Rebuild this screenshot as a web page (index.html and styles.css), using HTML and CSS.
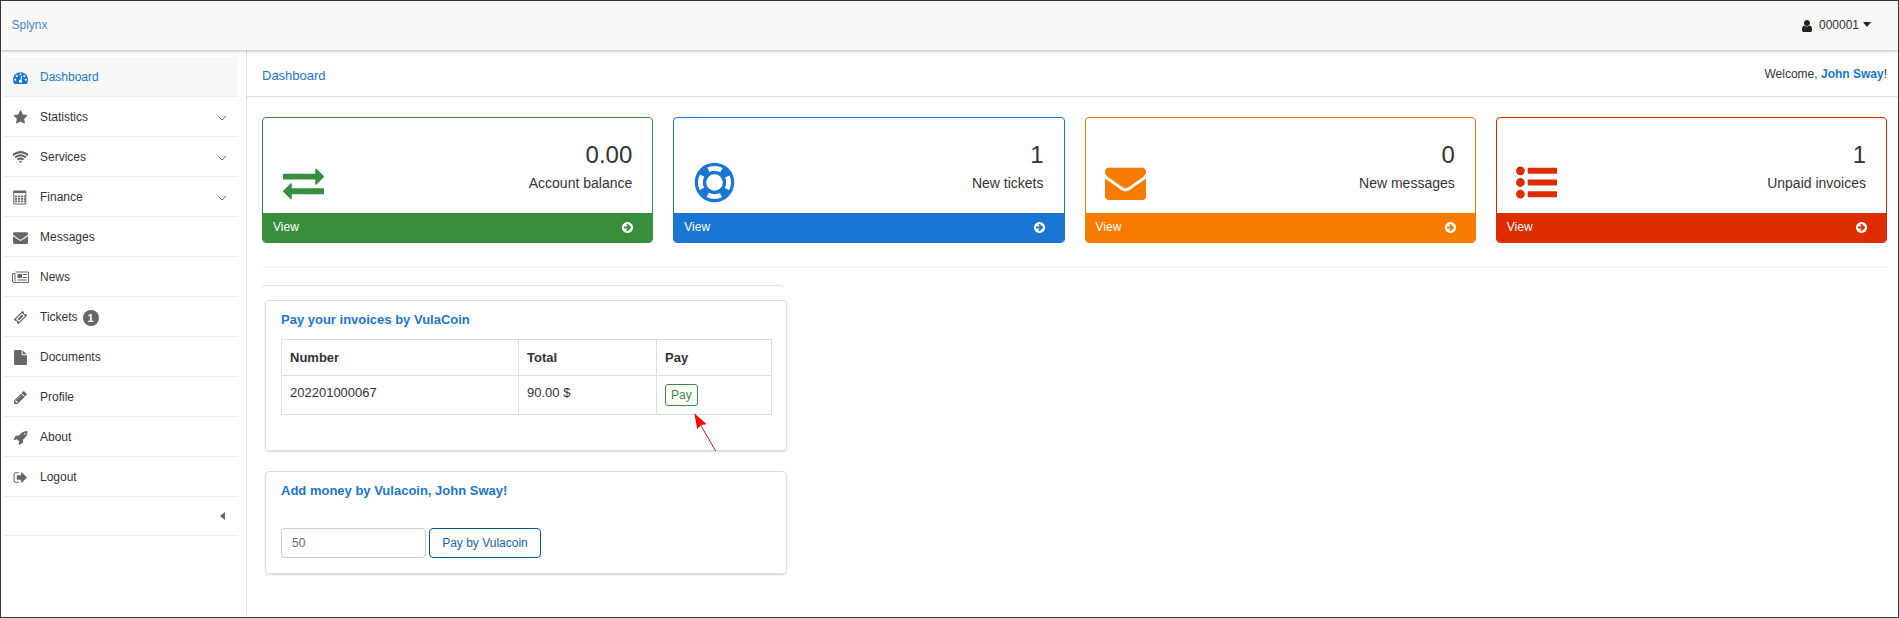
FILE: index.html
```html
<!DOCTYPE html>
<html lang="en">

<head>
    <meta charset="UTF-8">
    <meta name="viewport" content="width=device-width, initial-scale=1.0">
    <link rel="stylesheet" href="styles.css">
    <title>Splynx - Dashboard</title>
</head>

<body>
    <!-- icon sprite -->
    <svg class="sprite" xmlns="http://www.w3.org/2000/svg">
        <symbol id="i-go" viewBox="0 0 1792 1792"><path d="M1412 897q0-27-18-45l-91-91-362-362q-18-18-45-18t-45 18l-91 91q-18 18-18 45t18 45l189 189h-502q-26 0-45 19t-19 45v128q0 26 19 45t45 19h502l-189 189q-19 19-19 45t19 45l91 91q18 18 45 18t45-18l362-362 91-91q18-18 18-45zm252-1q0 209-103 385.5t-279.5 279.5-385.5 103-385.5-103-279.5-279.5-103-385.5 103-385.5 279.5-279.5 385.5-103 385.5 103 279.5 279.5 103 385.5z"/></symbol>
        <symbol id="i-envelope" viewBox="0 0 1792 1792"><path d="M1792 710v794q0 66-47 113t-113 47h-1472q-66 0-113-47t-47-113v-794q44 49 101 87 362 246 497 345 57 42 92.5 65.5t94.5 48 110 24.5h2q51 0 110-24.5t94.5-48 92.5-65.5q170-123 498-345 57-39 100-87zm0-294q0 79-49 151t-122 123q-376 261-468 325-10 7-42.5 30.5t-54 38-52 32.5-57.5 27-50 9h-2q-23 0-50-9t-57.5-27-52-32.5-54-38-42.5-30.5q-91-64-262-182.5t-205-142.5q-62-42-117-115.5t-55-136.5q0-78 41.5-130t118.5-52h1472q65 0 112.5 47t47.5 113z"/></symbol>
        <symbol id="i-chevron" viewBox="0 0 10 6"><path d="M1 1l4 4 4-4" fill="none" stroke="#666" stroke-width="1"/></symbol>
    </svg>

    <div class="page">
        <nav class="topbar">
            <a class="brand" href="#">Splynx</a>
            <div class="user-menu">
                <svg class="user-icon" viewBox="0 0 1792 1792"><path d="M1536 1399q0 109-62.5 187t-150.5 78h-854q-88 0-150.5-78t-62.5-187q0-85 8.5-160.5t31.5-152 58.5-131 94-89 134.5-34.5q131 128 313 128t313-128q76 0 134.5 34.5t94 89 58.5 131 31.5 152 8.5 160.5zm-256-887q0 159-112.5 271.5t-271.5 112.5-271.5-112.5-112.5-271.5 112.5-271.5 271.5-112.5 271.5 112.5 112.5 271.5z"/></svg>
                <span>000001</span>
                <span class="caret"></span>
            </div>
        </nav>

        <div class="layout">
            <aside class="sidebar">
                <ul class="side-menu">
                    <li class="side-item active">
                        <svg class="side-icon" viewBox="0 0 1792 1792"><path d="M384 1152q0-53-37.5-90.5t-90.5-37.5-90.5 37.5-37.5 90.5 37.5 90.5 90.5 37.5 90.5-37.5 37.5-90.5zm192-448q0-53-37.5-90.5t-90.5-37.5-90.5 37.5-37.5 90.5 37.5 90.5 90.5 37.5 90.5-37.5 37.5-90.5zm428 481l101-382q6-26-7.5-48.5t-38.5-29.5-48 6.5-30 39.5l-101 382q-60 5-107 43.5t-63 98.5q-20 77 20 146t117 89 146-20 89-117q16-60-6-117t-72-91zm660-33q0-53-37.5-90.5t-90.5-37.5-90.5 37.5-37.5 90.5 37.5 90.5 90.5 37.5 90.5-37.5 37.5-90.5zm-640-640q0-53-37.5-90.5t-90.5-37.5-90.5 37.5-37.5 90.5 37.5 90.5 90.5 37.5 90.5-37.5 37.5-90.5zm448 192q0-53-37.5-90.5t-90.5-37.5-90.5 37.5-37.5 90.5 37.5 90.5 90.5 37.5 90.5-37.5 37.5-90.5zm320 448q0 261-141 483-19 29-54 29h-1402q-35 0-54-29-141-221-141-483 0-182 71-348t191-286 286-191 348-71 348 71 286 191 191 286 71 348z"/></svg>
                        <span>Dashboard</span>
                    </li>
                    <li class="side-item">
                        <svg class="side-icon" viewBox="0 0 1792 1792"><path d="M1728 647q0 22-26 48l-363 354 86 500q1 7 1 20 0 21-10.5 35.5t-30.5 14.5q-19 0-40-12l-449-236-449 236q-22 12-40 12-21 0-31.5-14.5t-10.5-35.5q0-6 2-20l86-500-364-354q-25-27-25-48 0-37 56-46l502-73 225-455q19-41 49-41t49 41l225 455 502 73q56 9 56 46z"/></svg>
                        <span>Statistics</span>
                        <svg class="chevron"><use href="#i-chevron"/></svg>
                    </li>
                    <li class="side-item">
                        <svg class="side-icon" viewBox="0 0 1792 1792"><path d="M896 1523q-20 0-93-73.5t-73-93.5q0-32 62.5-54t103.5-22 103.5 22 62.5 54q0 20-73 93.5t-93 73.5zm270-271q-2 0-40-25t-101.5-50-128.5-25-128.5 25-101 50-40.5 25q-18 0-93.5-75t-75.5-93q0-13 10-23 78-77 196-121t233-44 233 44 196 121q10 10 10 23 0 18-75.5 93t-93.5 75zm273-272q-11 0-23-8-136-105-252-154.5t-268-49.5q-85 0-170.5 22t-149 53-113.5 62-79 53-31 22q-17 0-92-75t-75-93q0-12 10-22 132-132 320-205t380-73 380 73 320 205q10 10 10 22 0 18-75 93t-92 75zm271-271q-11 0-22-9-179-157-371.5-236.5t-420.5-79.5-420.5 79.5-371.5 236.5q-11 9-22 9-17 0-92.5-75t-75.5-93q0-13 10-23 187-186 445-288t527-102 527 102 445 288q10 10 10 23 0 18-75.5 93t-92.5 75z"/></svg>
                        <span>Services</span>
                        <svg class="chevron"><use href="#i-chevron"/></svg>
                    </li>
                    <li class="side-item">
                        <svg class="side-icon" viewBox="0 0 15 15">
                            <path d="M.8 1h12v13h-12z" fill="none" stroke="currentColor"/>
                            <path d="M.8 1h12v2h-12z"/>
                            <path d="M2 5.500h2.200v1.800h-2.200zM5 5.500h2.200v1.800h-2.200zM8 5.500h2.200v1.800h-2.200zM11 5.500h1.500v1.800h-1.500zM2 8h2.200v1.800h-2.200zM5 8h2.200v1.800h-2.200zM8 8h2.200v1.800h-2.200zM11 8h1.500v1.800h-1.500zM2 10.500h2.200v1.800h-2.200zM5 10.500h2.200v1.800h-2.200zM8 10.500h2.200v1.800h-2.200zM11 10.500h1.500v1.800h-1.500z"/>
                        </svg>
                        <span>Finance</span>
                        <svg class="chevron"><use href="#i-chevron"/></svg>
                    </li>
                    <li class="side-item">
                        <svg class="side-icon"><use href="#i-envelope"/></svg>
                        <span>Messages</span>
                    </li>
                    <li class="side-item">
                        <svg class="side-icon wide" viewBox="0 0 17 15">
                            <g transform="translate(0 -.5)">
                                <path d="M3.500 2.500h13v10.500h-14.500a1.500 1.500 0 0 1-1.500-1.500v-7.500h2.500v8" fill="none" stroke="currentColor"/>
                                <path d="M5.500 4.500h4.500v4h-4.500zM11 4.500h4v1h-4zM11 7.500h4v1h-4zM5.500 10h9.500v1h-9.500z"/>
                            </g>
                        </svg>
                        <span>News</span>
                    </li>
                    <li class="side-item">
                        <svg class="side-icon" viewBox="0 0 15 15">
                            <g transform="rotate(-45 7.500 7.500)">
                                <path d="M1.250 4.250h12.500v2a1.300 1.300 0 0 0 0 2.500v2h-12.500v-2a1.300 1.300 0 0 0 0-2.500z"/>
                                <path d="M3.200 5.400h8.600v4.200h-8.600z" fill="#fff"/>
                                <path d="M4.400 6.500h6.200v2h-6.200z"/>
                            </g>
                        </svg>
                        <span>Tickets</span>
                        <span class="badge">1</span>
                    </li>
                    <li class="side-item">
                        <svg class="side-icon" viewBox="0 0 1792 1792"><path d="M1152 512v-472q22 14 36 28l408 408q14 14 28 36h-472zm-128 32q0 40 28 68t68 28h544v1056q0 40-28 68t-68 28h-1344q-40 0-68-28t-28-68v-1600q0-40 28-68t68-28h800v544z"/></svg>
                        <span>Documents</span>
                    </li>
                    <li class="side-item">
                        <svg class="side-icon" viewBox="0 0 1792 1792"><path d="M491 1536l91-91-235-235-91 91v107h128v128h107zm523-928q0-22-22-22-10 0-17 7l-542 542q-7 7-7 17 0 22 22 22 10 0 17-7l542-542q7-7 7-17zm-54-192l416 416-832 832h-416v-416zm683 96q0 53-37 90l-166 166-416-416 166-165q36-38 90-38 53 0 91 38l235 234q37 39 37 91z"/></svg>
                        <span>Profile</span>
                    </li>
                    <li class="side-item">
                        <svg class="side-icon" viewBox="0 0 1792 1792"><path d="M1504 448q0-40-28-68t-68-28-68 28-28 68 28 68 68 28 68-28 28-68zm224-288q0 249-75.500 430.500t-253.500 360.500q-81 80-195 176l-20 379q-2 16-16 26l-384 224q-7 4-16 4-12 0-23-9l-64-64q-13-14-8-32l85-276-281-281-276 85q-3 1-9 1-14 0-23-9l-64-64q-17-19-5-39l224-384q10-14 26-16l379-20q96-114 176-195 188-187 358-258t431-71q14 0 24 9.500t10 22.500z"/></svg>
                        <span>About</span>
                    </li>
                    <li class="side-item">
                        <svg class="side-icon" viewBox="0 0 1792 1792"><path d="M704 1440q0 4 1 20t.5 26.500-3 23.500-10 19.500-20.500 6.500h-320q-119 0-203.500-84.500t-84.500-203.500v-704q0-119 84.500-203.500t203.500-84.500h320q13 0 22.500 9.500t9.500 22.500q0 4 1 20t.5 26.500-3 23.500-10 19.500-20.500 6.500h-320q-66 0-113 47t-47 113v704q0 66 47 113t113 47h312l11.500 1 11.500 3 8 5.500 7 9 2 13.500zm928-544q0 26-19 45l-544 544q-19 19-45 19t-45-19-19-45v-288h-448q-26 0-45-19t-19-45v-384q0-26 19-45t45-19h448v-288q0-26 19-45t45-19 45 19l544 544q19 19 19 45z"/></svg>
                        <span>Logout</span>
                    </li>
                    <li class="side-item side-toggle">
                        <span class="caret-left"></span>
                    </li>
                </ul>
            </aside>

            <main class="main">
                <header class="crumbs">
                    <a class="crumb-link" href="#">Dashboard</a>
                    <div class="welcome">Welcome, <a href="#">John Sway</a>!</div>
                </header>

                <div class="content">
                    <section class="tiles">
                        <div class="tile green">
                            <div class="tile-body">
                                <svg class="tile-icon" viewBox="0 0 1792 1792"><path d="M1792 1184v192q0 13-9.500 22.500t-22.500 9.500h-1376v192q0 13-9.500 22.500t-22.500 9.500q-12 0-24-10l-319-320q-9-9-9-22 0-14 9-23l320-320q9-9 23-9 13 0 22.500 9.500t9.500 22.500v192h1376q13 0 22.500 9.500t9.500 22.500zm0-544q0 14-9 23l-320 320q-9 9-23 9-13 0-22.500-9.500t-9.500-22.500v-192h-1376q-13 0-22.500-9.500t-9.500-22.500v-192q0-13 9.500-22.500t22.500-9.500h1376v-192q0-14 9-23t23-9q12 0 24 10l319 319q9 9 9 23z"/></svg>
                                <div class="tile-text">
                                    <div class="tile-num">0.00</div>
                                    <div class="tile-label">Account balance</div>
                                </div>
                            </div>
                            <a class="tile-foot" href="#"><span>View</span><svg class="go-icon"><use href="#i-go"/></svg></a>
                        </div>
                        <div class="tile blue">
                            <div class="tile-body">
                                <svg class="tile-icon" viewBox="0 0 42 42">
                                    <circle cx="21" cy="21" r="20.300"/>
                                    <circle class="ring-gap" cx="21" cy="21" r="14.500"/>
                                    <circle cx="21" cy="21" r="8.500" fill="#fff"/>
                                </svg>
                                <div class="tile-text">
                                    <div class="tile-num">1</div>
                                    <div class="tile-label">New tickets</div>
                                </div>
                            </div>
                            <a class="tile-foot" href="#"><span>View</span><svg class="go-icon"><use href="#i-go"/></svg></a>
                        </div>
                        <div class="tile orange">
                            <div class="tile-body">
                                <svg class="tile-icon"><use href="#i-envelope"/></svg>
                                <div class="tile-text">
                                    <div class="tile-num">0</div>
                                    <div class="tile-label">New messages</div>
                                </div>
                            </div>
                            <a class="tile-foot" href="#"><span>View</span><svg class="go-icon"><use href="#i-go"/></svg></a>
                        </div>
                        <div class="tile red">
                            <div class="tile-body">
                                <svg class="tile-icon" viewBox="0 0 1792 1792"><path d="M384 1408q0 80-56 136t-136 56-136-56-56-136 56-136 136-56 136 56 56 136zm0-512q0 80-56 136t-136 56-136-56-56-136 56-136 136-56 136 56 56 136zm1408 416v192q0 13-9.500 22.500t-22.500 9.500h-1216q-13 0-22.500-9.500t-9.500-22.500v-192q0-13 9.500-22.500t22.500-9.500h1216q13 0 22.500 9.500t9.500 22.500zm-1408-928q0 80-56 136t-136 56-136-56-56-136 56-136 136-56 136 56 56 136zm1408 416v192q0 13-9.500 22.500t-22.500 9.500h-1216q-13 0-22.500-9.500t-9.500-22.500v-192q0-13 9.500-22.500t22.500-9.500h1216q13 0 22.500 9.500t9.500 22.500zm0-512v192q0 13-9.500 22.500t-22.500 9.500h-1216q-13 0-22.500-9.500t-9.500-22.500v-192q0-13 9.500-22.500t22.500-9.500h1216q13 0 22.500 9.500t9.500 22.500z"/></svg>
                                <div class="tile-text">
                                    <div class="tile-num">1</div>
                                    <div class="tile-label">Unpaid invoices</div>
                                </div>
                            </div>
                            <a class="tile-foot" href="#"><span>View</span><svg class="go-icon"><use href="#i-go"/></svg></a>
                        </div>
                    </section>

                    <hr class="rule">

                    <section class="pay-col">
                        <div class="empty-panel"></div>

                        <div class="panel invoices">
                            <h3 class="panel-title">Pay your invoices by VulaCoin</h3>
                            <table class="pay-table">
                                <colgroup>
                                    <col class="col-number">
                                    <col class="col-total">
                                    <col class="col-pay">
                                </colgroup>
                                <thead>
                                    <tr>
                                        <th>Number</th>
                                        <th>Total</th>
                                        <th>Pay</th>
                                    </tr>
                                </thead>
                                <tbody>
                                    <tr>
                                        <td>202201000067</td>
                                        <td>90.00 $</td>
                                        <td><button class="btn-pay">Pay</button></td>
                                    </tr>
                                </tbody>
                            </table>
                            <!-- red annotation arrow -->
                            <svg class="callout" viewBox="0 0 30 45">
                                <path d="M25.700 41L10 14" stroke="#e8101a" stroke-width="1" fill="none"/>
                                <path d="M4.300 3.300L16.700 14.300 10.700 15 7.300 19.300z" fill="#f00"/>
                            </svg>
                        </div>

                        <div class="panel topup">
                            <h3 class="panel-title">Add money by Vulacoin, John Sway!</h3>
                            <form class="topup-form">
                                <input class="amount" type="text" value="50">
                                <button class="btn-vula" type="button">Pay by Vulacoin</button>
                            </form>
                        </div>
                    </section>
                </div>
            </main>
        </div>
    </div>
</body>

</html>
```

FILE: styles.css
```css
* {
    box-sizing: border-box;
}

html, body {
    margin: 0;
    height: 100%;
}

body {
    font-family: "Liberation Sans", Arial, sans-serif;
    font-size: 12px;
    line-height: 17px;
    color: #333;
    background: #fff;
    overflow: hidden;
}

a {
    color: #1976d2;
    text-decoration: none;
}

.sprite {
    display: none;
}

.page {
    display: flex;
    flex-direction: column;
    height: 618px;
    border: 1px solid #3a3a3a;
}

/* top bar */
.topbar {
    position: relative;
    z-index: 2;
    display: flex;
    align-items: center;
    justify-content: space-between;
    height: 49px;
    padding: 0 27px 0 10.500px;
    background: #f8f8f8;
    box-shadow: 0 1px 3px rgba(0, 0, 0, 0.3);
}

.brand {
    color: #4488d6;
}

.user-menu {
    display: flex;
    align-items: center;
}

.user-icon {
    width: 14px;
    height: 14px;
    margin-right: 5px;
    fill: #222;
}

.caret {
    width: 0;
    height: 0;
    margin-left: 4px;
    margin-top: -2px;
    border-top: 5px solid #222;
    border-left: 4.500px solid transparent;
    border-right: 4.500px solid transparent;
}

.layout {
    display: flex;
    flex: 1;
    min-height: 0;
}

/* sidebar */
.sidebar {
    width: 246px;
    flex: none;
    padding: 7px 8px 0 3px;
    border-right: 1px solid #ddd;
}

.side-menu {
    margin: 0;
    padding: 0;
    list-style: none;
}

.side-item {
    display: flex;
    align-items: center;
    height: 40px;
    padding: 2px 0 0 9px;
    border-bottom: 1px solid #eee;
}

.side-item.active {
    background: #f8f8f8;
    color: #1976d2;
}

.side-icon {
    width: 15px;
    height: 15px;
    flex: none;
    margin-right: 12px;
    fill: #666;
    color: #666;
}

.side-item.active .side-icon {
    fill: #1976d2;
}

.side-icon.wide {
    width: 17px;
    margin-left: -1px;
    margin-right: 11px;
}

.chevron {
    width: 10px;
    height: 6px;
    margin-left: auto;
    margin-right: 11px;
}

.badge {
    width: 16px;
    height: 16px;
    margin-left: 5px;
    border-radius: 50%;
    background: #666;
    color: #fff;
    font-size: 11px;
    font-weight: bold;
    line-height: 16px;
    text-align: center;
}

.side-toggle {
    justify-content: flex-end;
    height: 39px;
    padding: 0 13px 0 0;
}

.caret-left {
    width: 0;
    height: 0;
    border-right: 5px solid #666;
    border-top: 4.500px solid transparent;
    border-bottom: 4.500px solid transparent;
}

/* main column */
.main {
    flex: 1;
    min-width: 0;
}

.crumbs {
    display: flex;
    align-items: center;
    justify-content: space-between;
    height: 47px;
    padding: 0 11px 0 15px;
    border-bottom: 1px solid #ddd;
}

.crumb-link {
    margin-top: 5px;
    font-size: 13px;
}

.welcome {
    margin-top: 2px;
}

.welcome a {
    font-weight: bold;
}

.content {
    padding: 20px 11px 0 15px;
}

/* stat tiles */
.tiles {
    display: grid;
    grid-template-columns: repeat(4, 1fr);
    gap: 20px;
}

.tile {
    overflow: hidden;
    border: 1px solid var(--tile);
    border-radius: 4px;
}

.tile.green { --tile: #388e3c; }
.tile.blue { --tile: #1976d2; }
.tile.orange { --tile: #f57c00; }
.tile.red { --tile: #dd2c00; }

.tile-body {
    display: flex;
    justify-content: space-between;
    height: 95px;
    padding: 0 20px 0 19.500px;
}

.tile-icon {
    width: 41px;
    height: 41px;
    margin-top: 44px;
    fill: var(--tile);
}

.ring-gap {
    fill: none;
    stroke: #fff;
    stroke-width: 5;
    stroke-dasharray: 14 8.780;
    stroke-dashoffset: 7;
}

.tile-text {
    padding-top: 23px;
    text-align: right;
}

.tile-num {
    font-size: 24px;
    line-height: 27px;
}

.tile-label {
    margin-top: 5px;
    font-size: 14px;
    line-height: 20px;
}

.tile-foot {
    display: flex;
    align-items: center;
    justify-content: space-between;
    height: 29px;
    padding: 0 18px 0 10px;
    background: var(--tile);
    color: #fff;
}

.go-icon {
    width: 13px;
    height: 13px;
    fill: #fff;
}

.rule {
    height: 1px;
    margin: 24px 0 0;
    border: 0;
    background: #eee;
}

/* payment panels */
.pay-col {
    width: 522px;
}

.empty-panel {
    height: 4px;
    margin-top: 17px;
    border-top: 1px solid #ddd;
    border-radius: 4px 4px 0 0;
}

.panel {
    position: relative;
    margin-left: 3px;
    margin-right: -3px;
    border: 1px solid #ddd;
    border-radius: 4px;
    box-shadow: 0 1px 2px rgba(0, 0, 0, 0.15);
}

.invoices {
    height: 151px;
    margin-top: 11px;
    padding: 10px 15px 0;
}

.topup {
    height: 103px;
    margin-top: 20px;
    padding: 10px 15px 0;
}

.panel-title {
    margin: 0;
    color: #1976d2;
    font-size: 13px;
    font-weight: bold;
    line-height: 17px;
}

.pay-table {
    width: 490px;
    margin-top: 11px;
    border-collapse: collapse;
    table-layout: fixed;
    font-size: 13px;
}

.col-number { width: 237px; }
.col-total { width: 138px; }
.col-pay { width: 115px; }

.pay-table th,
.pay-table td {
    padding: 9px 8px;
    border: 1px solid #ddd;
    text-align: left;
    vertical-align: top;
}

.pay-table td {
    padding: 8px;
}

.btn-pay {
    display: block;
    height: 22px;
    padding: 0 5px;
    border: 1px solid #388e3c;
    border-radius: 3px;
    background: #fff;
    color: #388e3c;
    font-family: inherit;
    font-size: 12px;
}

.callout {
    position: absolute;
    left: 424px;
    top: 109px;
    width: 30px;
    height: 45px;
}

.topup-form {
    display: flex;
    gap: 3px;
    margin-top: 29px;
}

.amount {
    width: 145px;
    height: 30px;
    padding: 0 10px;
    border: 1px solid #ccc;
    border-radius: 4px;
    color: #666;
    font: inherit;
}

.btn-vula {
    width: 112px;
    height: 30px;
    padding: 0;
    border: 1px solid #01579b;
    border-radius: 4px;
    background: #fff;
    color: #1565a8;
    font: inherit;
}
```
